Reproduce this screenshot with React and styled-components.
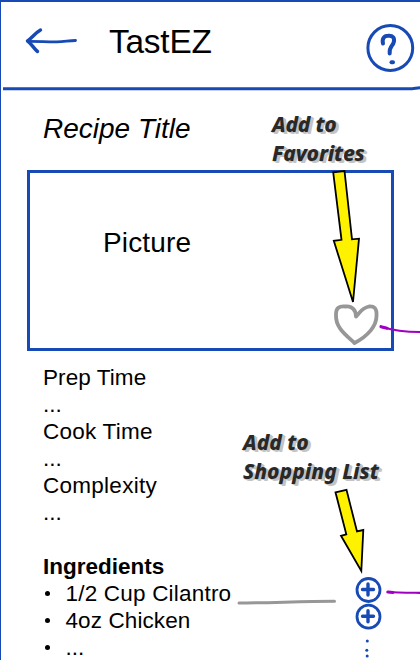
import React from "react";
import styled, { createGlobalStyle } from "styled-components";

const BLUE = "#184ab5";

const GlobalStyle = createGlobalStyle`
  body { margin: 0; background: #fff; }
  * { box-sizing: border-box; }
`;

const Screen = styled.main`
  position: relative;
  width: 420px;
  height: 660px;
  overflow: hidden;
  border-top: 2px solid ${BLUE};
  border-left: 1px solid ${BLUE};
  background: #fff;
  color: #000;
  font-family: "Liberation Sans", Arial, sans-serif;
`;

const Header = styled.header`
  display: flex;
  align-items: flex-start;
  height: 84px;
  padding: 0 5px 0 24px;
`;

const BackIcon = styled.svg`
  width: 54px;
  height: 28px;
  margin-top: 25px;
`;

const AppName = styled.h1`
  flex: 1;
  margin: 20px 0 0 30px;
  font-size: 33.4px;
  font-weight: 400;
  line-height: 40px;
  letter-spacing: -0.2px;
`;

const HelpIcon = styled.svg`
  width: 50px;
  height: 50px;
  margin-top: 21px;
`;

const Rule = styled.svg`
  display: block;
  width: 419px;
  height: 6px;
`;

const Body = styled.section`
  padding: 20px 27px 0 26px;
`;

const RecipeTitle = styled.h2`
  margin: 0 0 0 16px;
  height: 58px;
  font-size: 28px;
  font-style: italic;
  font-weight: 400;
  line-height: 34px;
`;

const Picture = styled.div`
  width: 367px;
  height: 181px;
  padding: 53px 0 0 73px;
  border: 3px solid ${BLUE};
  font-size: 28px;
  line-height: 34px;
  letter-spacing: 0.15px;
`;

const Details = styled.div`
  display: flex;
  flex-direction: column;
  margin: 13px 0 0 16px;
  font-size: 22.5px;
  line-height: 27px;
`;

const Line = styled.div`
  height: 27px;
  white-space: nowrap;
  letter-spacing: ${(p) => p.$tracking || "0"};
`;

const Heading = styled.h3`
  margin: 27px 0 0;
  font-size: 22.5px;
  line-height: 27px;
  font-weight: 700;
`;

const Ingredients = styled.ul`
  margin: 0;
  padding: 0;
  list-style: none;
`;

const Ingredient = styled.li`
  display: grid;
  grid-template-columns: 22.5px 1fr;
  height: 27px;
  white-space: nowrap;
  letter-spacing: ${(p) => p.$tracking || "0"};
`;

const Bullet = styled.span`
  align-self: center;
  width: 5px;
  height: 5px;
  margin: 0 0 1px 2px;
  border-radius: 50%;
  background: #000;
`;

const Overlay = styled.svg`
  position: absolute;
  top: -2px;
  left: -1px;
  width: 420px;
  height: 660px;
  pointer-events: none;
`;

const Note = styled.p`
  position: absolute;
  top: ${(p) => p.$top}px;
  left: ${(p) => p.$left}px;
  margin: 0;
  color: #292929;
  font: italic 800 21px/28.5px "Noto Sans", "Open Sans", sans-serif;
  letter-spacing: ${(p) => p.$tracking};
  white-space: pre-line;
  text-shadow: 1px 1px #c4c4c4, 2px 1px #c4c4c4, 3px 2px #c4c4c4;
`;

const AddButtonGlyph = ({ y }) => (
  <g fill="none" stroke={BLUE}>
    <circle cx="368.5" cy={y} r="11.5" strokeWidth="2.8" />
    <path d={`M362.5 ${y - 0.5}H373.5M368 ${y - 6}V${y + 5}`} strokeWidth="3.4" strokeLinecap="round" />
  </g>
);

export default function App() {
  return (
    <>
      <GlobalStyle />
      <Screen>
        <Header>
          <BackIcon viewBox="25 27 54 28" fill="none" stroke={BLUE} strokeWidth="3.4" strokeLinecap="round" strokeLinejoin="round">
            <path d="M40.5 30C35 33 32 38 27.5 41C31 43 34 49 37.5 51.5" />
            <path d="M28 41.3C39 41.2 48 42 57 41.8C64 41.8 69 40.5 75.5 40.5" strokeWidth="2.8" />
          </BackIcon>
          <AppName>TastEZ</AppName>
          <HelpIcon viewBox="365 23 50 50" fill="none" stroke={BLUE}>
            <circle cx="390.3" cy="48" r="22.4" strokeWidth="3" />
            <path d="M383 43.5C381.8 38.5 384 35.8 388 35.7C393 35.2 394.8 38 393.8 42C393 46 389 46 389.7 53.5" strokeWidth="4" strokeLinecap="round" />
            <path d="M391.5 62.2H393" strokeWidth="4" strokeLinecap="round" />
          </HelpIcon>
        </Header>
        <Rule viewBox="1 86 419 6">
          <path d="M3 88.7H412C415 88.7 416 87.9 421 87.6" fill="none" stroke={BLUE} strokeWidth="3" />
        </Rule>
        <Body>
          <RecipeTitle>Recipe Title</RecipeTitle>
          <Picture>Picture</Picture>
          <Details>
            <Line $tracking="0.08px">Prep Time</Line>
            <Line>...</Line>
            <Line $tracking="0.25px">Cook Time</Line>
            <Line>...</Line>
            <Line $tracking="0.27px">Complexity</Line>
            <Line>...</Line>
            <Heading>Ingredients</Heading>
            <Ingredients>
              <Ingredient $tracking="0.2px"><Bullet /><span>1/2 Cup Cilantro</span></Ingredient>
              <Ingredient $tracking="0.1px"><Bullet /><span>4oz Chicken</span></Ingredient>
              <Ingredient><Bullet /><span>...</span></Ingredient>
            </Ingredients>
          </Details>
        </Body>

        <Note $top={108} $left={271} $tracking="-0.2px">{"Add to\nFavorites"}</Note>
        <Note $top={426} $left={242} $tracking="-0.02px">{"Add to\nShopping List"}</Note>

        <Overlay viewBox="0 0 420 660" aria-hidden="true">
          <g fill="none" stroke="#979797" strokeWidth="3.8" strokeLinecap="round" strokeLinejoin="round">
            <path d="M356 316.5C356 310 352 306 346 306.5C339 305.5 335.8 308 336 315C335.5 328 346 335 354.5 343C368 336 376.5 326 376.5 316C377 308 374 306 369 306.5C361 308 360 313 356 316.5Z" />
            <path d="M239 603C270 603 300 601.2 334.5 601.2" strokeWidth="3" />
          </g>
          <g fill="none" stroke="#a000c4" strokeLinecap="round">
            <path d="M381 326.7C392 330 401 332 421 332" strokeWidth="2" />
            <path d="M381 326.7L387 328.2" strokeWidth="3.2" />
            <path d="M387.5 592C398 592.8 408 592.7 421 592.8" strokeWidth="2.2" />
            <path d="M388 592L393 592.4" strokeWidth="3" />
          </g>
          <g fill="#fff200" stroke="#000" strokeWidth="1.8" strokeLinejoin="miter">
            <path d="M333.2 172.3L344.5 171L352 239.3L359 238.7L353 302L333.8 240.8L341.5 239.8Z" />
            <path d="M335.5 492.3L346.5 489.8L357 531.5L363.3 530L361.3 571L341 535.8L346.3 534.3Z" />
          </g>
          <AddButtonGlyph y={590} />
          <AddButtonGlyph y={616.7} />
          <g fill={BLUE}>
            <circle cx="367.3" cy="641" r="1.5" />
            <circle cx="366.8" cy="650.2" r="1.5" />
            <circle cx="367.2" cy="656" r="1.5" />
          </g>
        </Overlay>
      </Screen>
    </>
  );
}
